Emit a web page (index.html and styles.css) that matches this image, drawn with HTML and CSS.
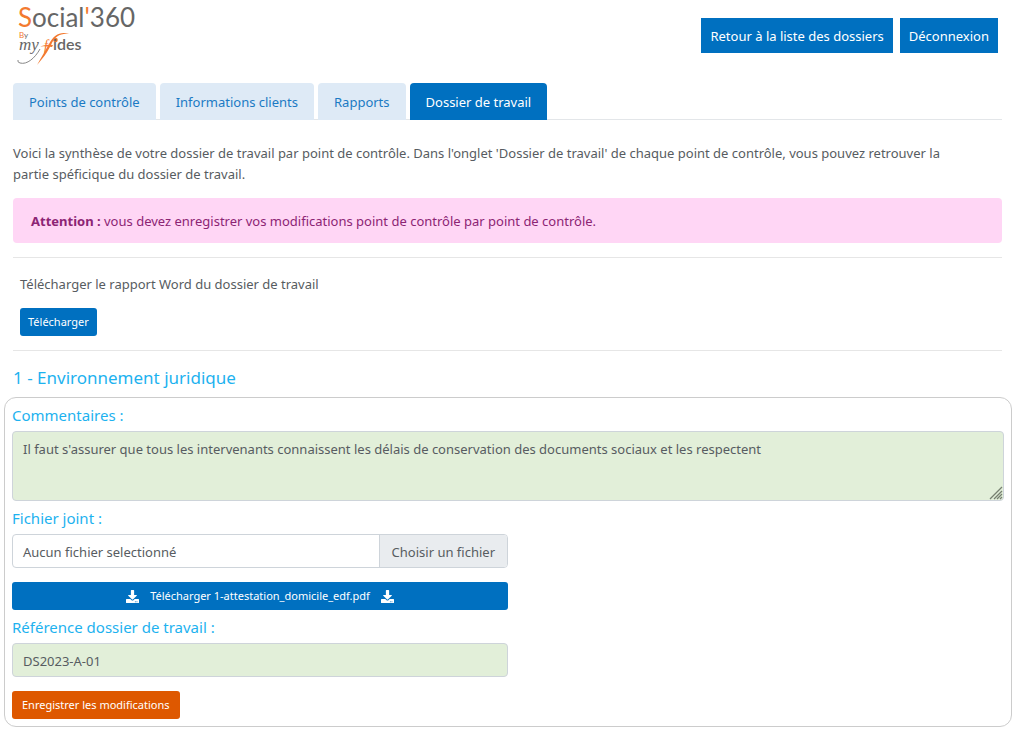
FILE: index.html
```html
<!DOCTYPE html>
<html lang="fr">
<head>
<meta charset="utf-8">
<meta name="viewport" content="width=device-width, initial-scale=1">
<title>Social'360 - Dossier de travail</title>
<link rel="stylesheet" href="styles.css">
</head>
<body>
<header class="header">
  <svg class="logo" viewBox="0 0 150 70" role="img" aria-label="Social'360 By myfides">
    <text class="logo-title" x="8" y="27"><tspan class="logo-accent">S</tspan>ocial<tspan class="logo-accent">'</tspan>360</text>
    <text class="logo-by" x="9" y="38"><tspan class="logo-accent">B</tspan>y</text>
    <text class="logo-my" x="9" y="50">my</text>
    <path d="M30 49C25 58 17 65 10 63Q7 62 8 60" fill="none" stroke="#888" stroke-width="1"/>
    <text class="logo-f" x="34" y="50">f</text>
    <path d="M60 34C51 31 44 34 39 44L27 65C33 58 37 53 41 45C45 36 50 33 60 34Z" fill="#f37a30"/>
    <path d="M30 46.500Q36 44 43 45L42 47Q35 46 30 46.500Z" fill="#f37a30"/>
    <circle cx="45.500" cy="40" r="2.300" fill="#f37a30"/>
    <text class="logo-ides" x="43" y="50">ides</text>
  </svg>
  <nav class="header-actions" aria-label="Compte">
    <a class="header-btn" href="#dossiers">Retour à la liste des dossiers</a>
    <a class="header-btn" href="#deconnexion">Déconnexion</a>
  </nav>
</header>
<main>
  <div class="content">
    <nav class="tabs" aria-label="Sections">
      <a class="tab" href="#points">Points de contrôle</a>
      <a class="tab" href="#clients">Informations clients</a>
      <a class="tab" href="#rapports">Rapports</a>
      <a class="tab tab-active" href="#travail" aria-current="page">Dossier de travail</a>
    </nav>
    <p class="intro">Voici la synthèse de votre dossier de travail par point de contrôle. Dans l'onglet 'Dossier de travail' de chaque point de contrôle, vous pouvez retrouver la partie spéficique du dossier de travail.</p>
    <div class="alert" role="alert"><strong>Attention :</strong> vous devez enregistrer vos modifications point de contrôle par point de contrôle.</div>
    <section class="report">
      <p class="report-text">Télécharger le rapport Word du dossier de travail</p>
      <button class="btn" type="button">Télécharger</button>
    </section>
    <h1 class="title">1 - Environnement juridique</h1>
  </div>
  <form class="card">
    <label class="label" for="comments">Commentaires :</label>
    <div class="comments">
      <textarea class="field field-area" id="comments">Il faut s'assurer que tous les intervenants connaissent les délais de conservation des documents sociaux et les respectent</textarea>
      <svg class="grip" viewBox="0 0 14 14" aria-hidden="true"><path d="M1 13L13 1M5 13L13 5M8 13L13 8M11 13L13 11" stroke="#768070" stroke-width="1.300"/></svg>
    </div>
    <div class="half">
      <label class="label" for="file-button">Fichier joint :</label>
      <div class="file">
        <span class="file-name">Aucun fichier selectionné</span>
        <button class="file-btn" id="file-button" type="button">Choisir un fichier</button>
      </div>
      <button class="btn btn-wide" type="button">
        <svg class="icon" viewBox="0 0 512 512" aria-hidden="true"><path d="M216 0h80c13 0 24 11 24 24v168h88c18 0 27 21 14 34L270 378c-8 8-20 8-28 0L90 226c-13-13-4-34 14-34h88V24c0-13 11-24 24-24zm296 376v112c0 13-11 24-24 24H24c-13 0-24-11-24-24V376c0-13 11-24 24-24h147l49 49c20 20 52 20 72 0l49-49h147c13 0 24 11 24 24zM388 464a20 20 0 1 0-40 0 20 20 0 0 0 40 0zm64 0a20 20 0 1 0-40 0 20 20 0 0 0 40 0z"/></svg>
        <span>Télécharger 1-attestation_domicile_edf.pdf</span>
        <svg class="icon" viewBox="0 0 512 512" aria-hidden="true"><path d="M216 0h80c13 0 24 11 24 24v168h88c18 0 27 21 14 34L270 378c-8 8-20 8-28 0L90 226c-13-13-4-34 14-34h88V24c0-13 11-24 24-24zm296 376v112c0 13-11 24-24 24H24c-13 0-24-11-24-24V376c0-13 11-24 24-24h147l49 49c20 20 52 20 72 0l49-49h147c13 0 24 11 24 24zM388 464a20 20 0 1 0-40 0 20 20 0 0 0 40 0zm64 0a20 20 0 1 0-40 0 20 20 0 0 0 40 0z"/></svg>
      </button>
      <label class="label" for="reference">Référence dossier de travail :</label>
      <input class="field" id="reference" type="text" value="DS2023-A-01">
    </div>
    <button class="btn btn-save" type="submit">Enregistrer les modifications</button>
  </form>
</main>
</body>
</html>
```
FILE: styles.css
```css
* { box-sizing: border-box; }
body {
  margin: 0;
  background: #fff;
  color: #575c61;
  font: 13px/21px "Noto Sans", "Open Sans", sans-serif;
}
p, h1 { margin: 0; }
a { text-decoration: none; }
button, input, textarea { font: inherit; color: inherit; }
button { cursor: pointer; }

.header {
  display: flex;
  justify-content: space-between;
  align-items: flex-start;
  height: 83px;
  padding: 0 26px 0 10px;
}
.logo { width: 150px; height: 70px; }
.logo text { font-family: Lato, sans-serif; fill: #666; }
.logo .logo-title { font-size: 26px; }
.logo .logo-accent { fill: #f37a30; }
.logo .logo-by { font-size: 8px; }
.logo .logo-my { font: italic 17px "Liberation Serif", serif; }
.logo .logo-f { font: italic 14px "Liberation Serif", serif; fill: #f37a30; }
.logo .logo-ides { font: 600 16px Lato, sans-serif; }
.header-actions { display: flex; gap: 7px; padding-top: 18px; }
.header-btn {
  padding: 8px 9px 6px;
  background: #0070c0;
  color: #fff;
}

.content { padding: 0 22px 0 13px; }
.tabs {
  display: flex;
  gap: 4px;
  border-bottom: 1px solid #e3e6e9;
}
.tab {
  margin-bottom: -1px;
  padding: 9px 16px 7px;
  border-radius: 4px 4px 0 0;
  background: #deeaf6;
  color: #1b7ac4;
}
.tab-active { background: #0070c0; color: #fff; }
.intro { padding: 23px 24px 13px 0; }
.alert {
  padding: 13px 18px 11px;
  border-radius: 4px;
  background: #ffd6f5;
  color: #8c2474;
}
.report {
  margin-top: 14px;
  padding: 16px 7px 14px;
  border-top: 1px solid #e6e6e6;
  border-bottom: 1px solid #e6e6e6;
}
.report-text { margin-bottom: 13px; }
.btn {
  display: block;
  padding: 4px 8px;
  border: 0;
  border-radius: 3px;
  background: #0070c0;
  color: #fff;
  font-size: 11px;
  line-height: 20px;
}
.title {
  padding: 16px 0 8px;
  color: #1db2ef;
  font-size: 17px;
  font-weight: 400;
  line-height: 22px;
}

.card {
  margin: 0 12px 0 4px;
  padding: 7px;
  border: 1px solid #ccc;
  border-radius: 12px;
}
.label {
  display: block;
  margin-bottom: 5px;
  color: #1db2ef;
  font-size: 15px;
  line-height: 21px;
}
.field {
  display: block;
  width: 100%;
  height: 34px;
  padding: 7px 10px 5px;
  border: 1px solid #ced4da;
  border-radius: 4px;
  background: #e2efd9;
}
.comments { position: relative; margin-bottom: 7px; }
.field-area { height: 70px; resize: none; }
.grip {
  position: absolute;
  right: 1px;
  bottom: 1px;
  width: 14px;
  height: 14px;
  pointer-events: none;
}
.half { width: 50%; }
.file {
  display: flex;
  height: 34px;
  margin-bottom: 14px;
  border: 1px solid #ced4da;
  border-radius: 4px;
  overflow: hidden;
}
.file-name { flex: 1; padding: 7px 10px 5px; }
.file-btn {
  padding: 2px 12px 0;
  border: 0;
  border-left: 1px solid #ced4da;
  background: #e9ecef;
}
.btn-wide {
  display: flex;
  justify-content: center;
  align-items: center;
  gap: 11px;
  width: 100%;
  margin-bottom: 7px;
}
.icon { width: 13px; height: 13px; fill: #fff; }
.btn-save { margin-top: 14px; padding: 4px 10px; background: #de5800; }
```
